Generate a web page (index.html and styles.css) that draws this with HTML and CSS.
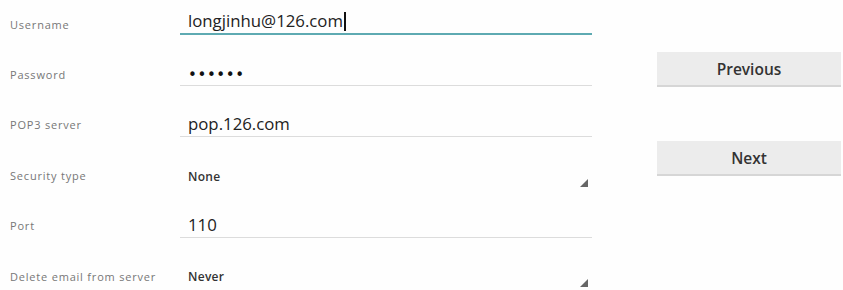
FILE: index.html
```html
<!DOCTYPE html>
<html>
<head>
<meta charset="utf-8">
<link rel="stylesheet" href="styles.css">
</head>
<body>
<div class="page">
  <div class="form">
    <div class="row">
      <div class="label">Username</div>
      <div class="field focused"><span class="value">longjinhu@126.com</span><span class="cursor"></span></div>
    </div>
    <div class="row">
      <div class="label">Password</div>
      <div class="field"><span class="value dots">••••••</span></div>
    </div>
    <div class="row">
      <div class="label">POP3 server</div>
      <div class="field"><span class="value">pop.126.com</span></div>
    </div>
    <div class="row">
      <div class="label">Security type</div>
      <div class="spinner"><span class="choice">None</span><svg class="tri" width="8" height="8" viewBox="0 0 8 8"><polygon points="8,0 8,8 0,8" fill="#666"/></svg></div>
    </div>
    <div class="row">
      <div class="label">Port</div>
      <div class="field"><span class="value">110</span></div>
    </div>
    <div class="row">
      <div class="label">Delete email from server</div>
      <div class="spinner"><span class="choice">Never</span><svg class="tri" width="8" height="8" viewBox="0 0 8 8"><polygon points="8,0 8,8 0,8" fill="#666"/></svg></div>
    </div>
  </div>
  <div class="actions">
    <div class="btn">Previous</div>
    <div class="btn">Next</div>
  </div>
</div>
</body>
</html>
```
FILE: styles.css
```css
html, body {
  margin: 0;
  padding: 0;
  background: #fefefe;
  font-family: "Open Sans", "Noto Sans", sans-serif;
}
.page {
  display: flex;
  width: 843px;
  height: 290px;
  overflow: hidden;
}
.form {
  width: 600px;
  display: flex;
  flex-direction: column;
  flex-shrink: 0;
}
.row {
  height: 50.4px;
  flex-shrink: 0;
  display: grid;
  grid-template-columns: 180px 412px;
  align-items: start;
}
.label {
  font-size: 11px;
  letter-spacing: 0.8px;
  color: #777;
  align-self: center;
  padding-left: 10px;
  margin-top: -2px;
}
.field {
  height: 36px;
  box-sizing: border-box;
  border-bottom: 1px solid #dcdcdc;
  padding: 11px 0 0 8px;
  display: flex;
  align-items: flex-start;
}
.field.focused {
  height: 35px;
  padding-top: 9px;
  border-bottom: 2px solid #5eaab2;
}
.value {
  font-size: 16.8px;
  line-height: 24px;
  color: #222;
}
.dots {
  font-family: "DejaVu Sans", sans-serif;
  font-size: 15px;
  letter-spacing: 0.6px;
  color: #111;
  margin-top: 2px;
}
.cursor {
  width: 1.5px;
  height: 19px;
  background: #111;
  margin-top: 3px;
  margin-left: 1px;
}
.spinner {
  height: 50px;
  display: flex;
  align-items: center;
  justify-content: space-between;
  padding: 0 4px 0 8px;
}
.choice {
  font-size: 12px;
  letter-spacing: 0.3px;
  font-weight: 600;
  color: #333;
}
.tri {
  margin-top: 13px;
}
.actions {
  margin-left: 57px;
  width: 184px;
  padding-top: 52px;
  display: flex;
  flex-direction: column;
  gap: 54px;
}
.btn {
  height: 35px;
  box-sizing: border-box;
  background: #ececec;
  border-bottom: 2px solid #d6d6d6;
  display: flex;
  align-items: center;
  justify-content: center;
  font-size: 15.5px;
  color: #333;
  font-weight: 600;
}
```
